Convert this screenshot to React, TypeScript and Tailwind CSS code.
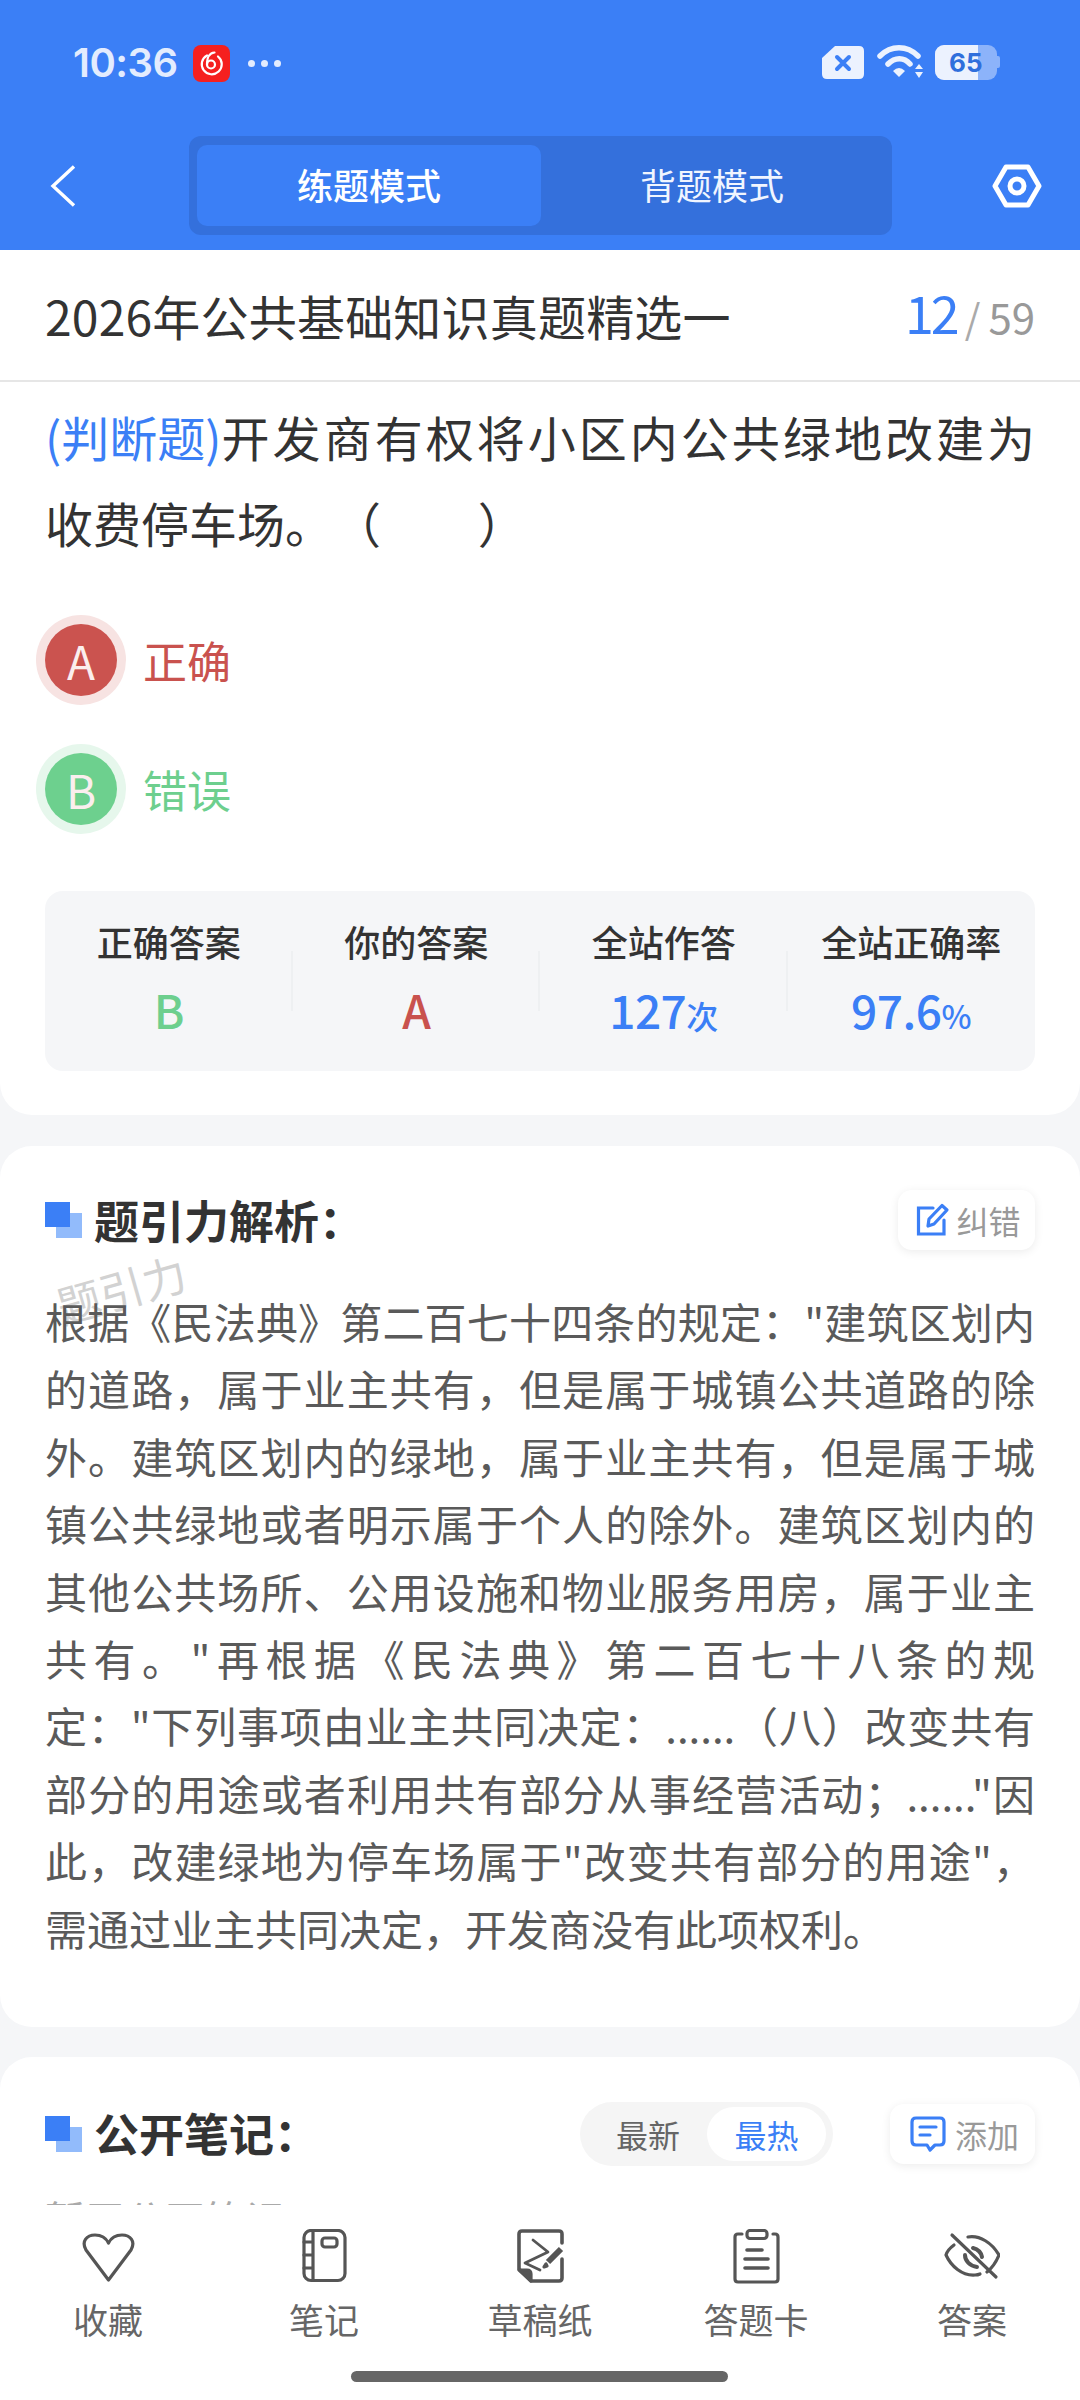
const cjk = "font-['Noto_Sans_CJK_SC','Noto_Sans',sans-serif]";

const analysis = [
  '根据《民法典》第二百七十四条的规定："建筑区划内',
  '的道路，属于业主共有，但是属于城镇公共道路的除',
  '外。建筑区划内的绿地，属于业主共有，但是属于城',
  '镇公共绿地或者明示属于个人的除外。建筑区划内的',
  '其他公共场所、公用设施和物业服务用房，属于业主',
  '共有。"再根据《民法典》第二百七十八条的规',
  '定："下列事项由业主共同决定：......（八）改变共有',
  '部分的用途或者利用共有部分从事经营活动；......"因',
  '此，改建绿地为停车场属于"改变共有部分的用途"，',
];

const stats = [
  { label: '正确答案', value: 'B', unit: '', color: 'text-[#6dcf8e]' },
  { label: '你的答案', value: 'A', unit: '', color: 'text-[#c9524e]' },
  { label: '全站作答', value: '127', unit: '次', color: 'text-[#3b7ff6]' },
  { label: '全站正确率', value: '97.6', unit: '%', color: 'text-[#3b7ff6]' },
];

function StatusBar() {
  return (
    <div className="flex h-[136px] items-start justify-between pt-[44px] pl-[73px] pr-[80px]">
      <div className="flex h-[38px] items-center">
        <span className="font-['Inter',sans-serif] text-[40px] leading-none font-semibold tracking-[-0.5px] text-[#e3ecfe]">10:36</span>
        <div className="ml-[15px] flex h-[37px] w-[37px] items-center justify-center rounded-[8px] bg-[#f5201f]">
          <svg width="26" height="26" viewBox="0 0 26 26" fill="none" stroke="#fff" strokeWidth="2.2" strokeLinecap="round">
            <path d="M9 5.5A10 10 0 1 0 20 6.5" />
            <circle cx="13" cy="14.5" r="4" />
            <path d="M9 14.5C9 8 11 3 16.5 2.5" />
          </svg>
        </div>
        <div className="ml-[18px] flex gap-[6px]">
          <span className="h-[7px] w-[7px] rounded-full bg-[#e3ecfe]" />
          <span className="h-[7px] w-[7px] rounded-full bg-[#e3ecfe]" />
          <span className="h-[7px] w-[7px] rounded-full bg-[#e3ecfe]" />
        </div>
      </div>
      <div className="flex h-[36px] items-center">
        <svg width="44" height="35" viewBox="0 0 44 35">
          <path d="M14 1H38Q43 1 43 6V29Q43 34 38 34H6Q1 34 1 29V13Z" fill="#ecf2fe" />
          <path d="M16 12L28 24M28 12L16 24" stroke="#3b7ff6" strokeWidth="4" strokeLinecap="round" />
        </svg>
        <svg className="ml-[12px]" width="48" height="36" viewBox="0 0 48 36" fill="none">
          <path d="M3 12C14 1 30 1 41 12" stroke="#ecf2fe" strokeWidth="5.5" strokeLinecap="round" />
          <path d="M11 20C18 13 27 13 33 20" stroke="#ecf2fe" strokeWidth="5.5" strokeLinecap="round" />
          <path d="M16 27Q22 21 28 27L22 33Z" fill="#ecf2fe" />
          <path d="M38 25L42 20L46 25ZM38 28L46 28L42 34Z" fill="#ecf2fe" />
        </svg>
        <div className="relative ml-[10px] flex h-[35px] w-[62px] overflow-hidden rounded-[9px] bg-[#8cb3fa]">
          <div className="w-[43px] bg-[#ecf2fe]" />
          <span className="absolute left-[14px] top-0 font-['Inter',sans-serif] text-[26px] leading-[35px] font-bold text-[#2f6fdc]">65</span>
        </div>
        <div className="h-[12px] w-[3px] rounded-r-[2px] bg-[#8cb3fa]" />
      </div>
    </div>
  );
}

function Header() {
  return (
    <div className="h-[250px] bg-[#3b7ff6]">
      <StatusBar />
      <div className="flex h-[99px] items-center justify-between pl-[50px] pr-[38px]">
        <svg width="26" height="42" viewBox="0 0 26 42" fill="none" stroke="#fff" strokeWidth="3.4">
          <path d="M24 1.5L3 21L24 40.5" />
        </svg>
        <div className={`ml-[13px] flex h-[99px] w-[703px] items-center rounded-[12px] bg-[#3470dc] pl-[8px] ${cjk}`}>
          <div className="flex h-[81px] w-[344px] items-center justify-center rounded-[10px] bg-[#3b7ff6] pb-[3px] text-[36px] font-medium text-white">练题模式</div>
          <div className="flex h-[81px] w-[342px] items-center justify-center pb-[3px] text-[36px] text-[#f0f5ff]">背题模式</div>
        </div>
        <svg width="50" height="44" viewBox="0 0 50 44" fill="none" stroke="#fff" strokeWidth="5" strokeLinejoin="round">
          <path d="M14 3H36L47 22L36 41H14L3 22Z" />
          <circle cx="25" cy="22" r="7" />
        </svg>
      </div>
    </div>
  );
}

function OptionRow({ letter, text, dot, ring, color }: { letter: string; text: string; dot: string; ring: string; color: string }) {
  return (
    <div className="flex items-center">
      <div className={`flex h-[90px] w-[90px] items-center justify-center rounded-full ${ring}`}>
        <div className={`flex h-[72px] w-[72px] items-center justify-center rounded-full ${dot} text-[46px] text-[#fbeeee]`}>{letter}</div>
      </div>
      <span className={`ml-[17px] text-[44px] leading-none ${color}`}>{text}</span>
    </div>
  );
}

function SectionIcon() {
  return (
    <div className="relative h-[36px] w-[37px] shrink-0">
      <div className="absolute bottom-0 right-0 h-[25px] w-[26px] bg-[#92bbfb]" />
      <div className="absolute left-0 top-0 h-[25px] w-[25px] bg-[#3b7ff6]" />
    </div>
  );
}

function Question() {
  return (
    <section className="h-[865px] rounded-b-[32px] bg-white">
      <div className={`flex h-[132px] items-center justify-between border-b-2 border-[#e6e6e6] pl-[45px] pr-[45px] ${cjk}`}>
        <span className="text-[48px] leading-none tracking-[0.2px] text-[#333]">2026年公共基础知识真题精选一</span>
        <span className="flex items-baseline pb-[6px]">
          <span className="text-[52px] leading-none tracking-[-3px] text-[#3b7ff6]">12</span>
          <span className="ml-[8px] text-[40px] leading-none text-[#aaa]">/</span>
          <span className="ml-[8px] text-[42px] leading-none text-[#999]">59</span>
        </span>
      </div>
      <div className={`px-[45px] pt-[11px] text-[48px] leading-[86px] text-[#333] [text-spacing-trim:space-all] ${cjk}`}>
        <p className="text-justify [text-align-last:justify]"><span className="tracking-[-3px] text-[#3b7ff6]">(判断题)</span>开发商有权将小区内公共绿地改建为</p>
        <p>收费停车场。（&nbsp;&nbsp;&nbsp;&nbsp;&nbsp;&nbsp;&nbsp;&nbsp;&nbsp;）</p>
      </div>
      <div className={`flex flex-col gap-[39px] pl-[36px] pt-[50px] ${cjk}`}>
        <OptionRow letter="A" text="正确" dot="bg-[#cb534f]" ring="bg-[#f7e3e2]" color="text-[#c9524e]" />
        <OptionRow letter="B" text="错误" dot="bg-[#6dd08e]" ring="bg-[#e6f7ec]" color="text-[#6dcf8e]" />
      </div>
      <div className={`mx-[45px] mt-[57px] grid h-[180px] grid-cols-4 items-start rounded-[18px] bg-[#f5f6f8] pt-[25px] ${cjk}`}>
        {stats.map((s, i) => (
          <div key={s.label} className="relative flex flex-col items-center">
            {i > 0 && <div className="absolute -left-[2px] top-[35px] h-[60px] w-[2px] bg-[#eef0f2]" />}
            <span className="text-[36px] leading-[50px] font-medium text-[#333]">{s.label}</span>
            <span className={`mt-[18px] flex items-baseline leading-none font-medium ${s.color}`}>
              <span className="text-[46px] leading-[50px] tracking-[-0.5px]">{s.value}</span>
              {s.unit && <span className="text-[32px] leading-[50px]">{s.unit}</span>}
            </span>
          </div>
        ))}
      </div>
    </section>
  );
}

function Analysis() {
  return (
    <section className={`relative mt-[31px] h-[881px] rounded-[32px] bg-white px-[45px] pt-[44px] ${cjk}`}>
      <div className="flex h-[60px] items-center justify-between">
        <div className="flex items-center">
          <SectionIcon />
          <span className="ml-[12px] pb-[2px] text-[45px] leading-none font-semibold text-[#333]">题引力解析：</span>
        </div>
        <div className="flex h-[60px] w-[137px] items-center justify-center rounded-[14px] bg-white pl-[4px] shadow-[0_2px_10px_rgba(0,0,0,0.08)]">
          <svg width="34" height="34" viewBox="0 0 34 34" fill="none" stroke="#3b7ff6" strokeWidth="3.2" strokeLinecap="round">
            <path d="M17 5H2.5V31H28V17" />
            <path d="M12 23L13 16L26 2.5L31 7L18 21Z" strokeLinejoin="round" />
          </svg>
          <span className="ml-[6px] text-[32px] leading-none text-[#999]">纠错</span>
        </div>
      </div>
      <span className="absolute left-[55px] top-[120px] -rotate-[16deg] text-[44px] leading-none text-[#d2d2d2]">题引力</span>
      <div className="relative mt-[37px] text-[42px] leading-[67.4px] text-[#5a5a5a]">
        {analysis.map(line => (
          <p key={line} className="text-justify whitespace-nowrap [text-align-last:justify]">{line}</p>
        ))}
        <p>需通过业主共同决定，开发商没有此项权利。</p>
      </div>
    </section>
  );
}

function Notes() {
  return (
    <section className={`mt-[30px] rounded-t-[32px] bg-white px-[45px] pt-[45px] ${cjk}`}>
      <div className="flex h-[64px] items-center">
        <SectionIcon />
        <span className="ml-[12px] pb-[3px] text-[45px] leading-none font-semibold text-[#333]">公开笔记：</span>
        <div className="ml-auto flex h-[64px] w-[253px] items-center justify-end rounded-full bg-[#f5f5f5] pr-[7px]">
          <span className="mr-[27px] text-[32px] leading-none text-[#666]">最新</span>
          <span className="flex h-[54px] w-[119px] items-center justify-center rounded-full bg-white text-[32px] leading-none text-[#3b7ff6]">最热</span>
        </div>
        <div className="ml-[57px] flex h-[60px] w-[145px] items-center justify-center rounded-[14px] bg-white pl-[4px] shadow-[0_2px_10px_rgba(0,0,0,0.08)]">
          <svg width="36" height="36" viewBox="0 0 36 36" fill="none" stroke="#3b7ff6" strokeWidth="3.2" strokeLinecap="round" strokeLinejoin="round">
            <path d="M6 2H30Q34 2 34 6V25Q34 29 30 29H25L20 34L17 29H6Q2 29 2 25V6Q2 2 6 2Z" />
            <path d="M10 11H26M10 19H20" />
          </svg>
          <span className="ml-[9px] text-[32px] leading-none text-[#999]">添加</span>
        </div>
      </div>
      <p className="mt-[32px] text-[40px] leading-none text-[#aaa]">暂无公开笔记</p>
    </section>
  );
}

const navStroke = { fill: 'none', stroke: '#555', strokeWidth: 3.2, strokeLinecap: 'round', strokeLinejoin: 'round' } as const;

const navItems = [
  {
    label: '收藏',
    icon: <path d="M28.5 51L6 21C1 12 7 6 15 6C21 6 26 9 28.5 14C31 9 36 6 42 6C50 6 56 12 51 21Z" />,
  },
  {
    label: '笔记',
    icon: (
      <>
        <rect x="8" y="1.5" width="41" height="50" rx="7" />
        <path d="M17 1.5V51.5M8 13H17M8 26H17M8 39H17" />
        <rect x="26" y="9" width="15" height="9" rx="3" />
      </>
    ),
  },
  {
    label: '草稿纸',
    icon: (
      <>
        <path d="M50 14V5Q50 2 47 2H10Q7 2 7 5V40L19 52H47Q50 52 50 49V30" strokeWidth="3.6" />
        <path d="M7 41H15Q19 41 19 45V52Z" fill="#555" />
        <path d="M21 11L36 23L13 34L28 41" strokeWidth="2.8" />
        <path d="M49 20L36 33" strokeWidth="6" strokeLinecap="butt" />
        <path d="M34 35L32 38L35 37Z" fill="#555" />
      </>
    ),
  },
  {
    label: '答题卡',
    icon: (
      <>
        <path d="M14 5H10Q7 5 7 8V50Q7 53 10 53H47Q50 53 50 50V8Q50 5 47 5H45" />
        <rect x="19" y="1.5" width="20" height="8" rx="3" />
        <path d="M19 21H34M17 30H40M17 39H40" strokeWidth="3.6" />
      </>
    ),
  },
  {
    label: '答案',
    icon: (
      <>
        <path d="M24 8C36 6 48 14 55 26C53 31 49 38 43 43" />
        <path d="M10 16C6 19 3 22 2 26C7 37 18 47 31 46Q34 46 36 45" />
        <path d="M21 26C21 32 26 37 33 38" strokeWidth="4" />
        <path d="M29 19C33 20 37 23 38 28" strokeWidth="4" />
        <path d="M8 6L52 48" />
      </>
    ),
  },
];

function BottomNav() {
  return (
    <nav className={`relative h-[195px] shrink-0 bg-white ${cjk}`}>
      <div className="grid grid-cols-5 pt-[24px]">
        {navItems.map(item => (
          <div key={item.label} className="flex flex-col items-center">
            <svg width="56" height="56" viewBox="0 0 56 56" {...navStroke}>{item.icon}</svg>
            <span className="mt-[10px] text-[35px] leading-[48px] text-[#666]">{item.label}</span>
          </div>
        ))}
      </div>
      <div className="absolute bottom-[18px] left-[351px] h-[11px] w-[377px] rounded-full bg-[#666]" />
    </nav>
  );
}

export default function App() {
  return (
    <div className="flex h-[2400px] w-[1080px] flex-col overflow-hidden bg-[#f5f6f8]">
      <Header />
      <main className="min-h-0 flex-1 overflow-hidden">
        <Question />
        <Analysis />
        <Notes />
      </main>
      <BottomNav />
    </div>
  );
}
